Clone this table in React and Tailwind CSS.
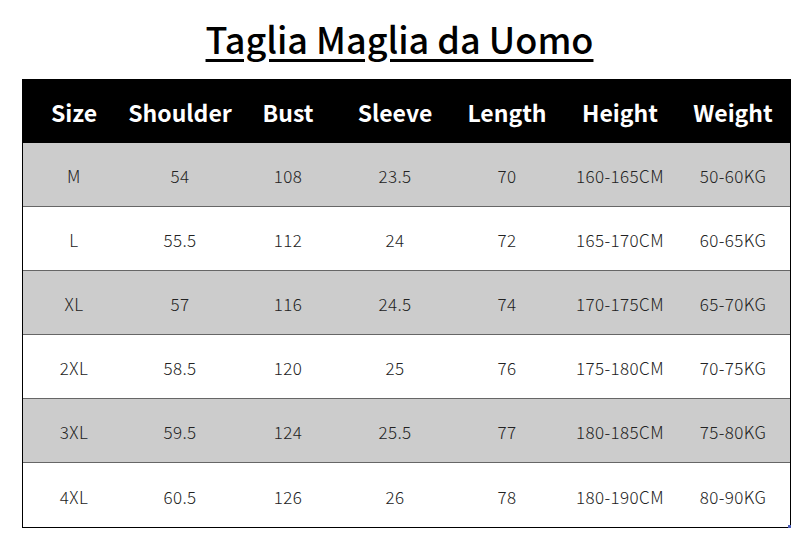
const headers = ['Size', 'Shoulder', 'Bust', 'Sleeve', 'Length', 'Height', 'Weight']

const rows = [
  ['M', '54', '108', '23.5', '70', '160-165CM', '50-60KG'],
  ['L', '55.5', '112', '24', '72', '165-170CM', '60-65KG'],
  ['XL', '57', '116', '24.5', '74', '170-175CM', '65-70KG'],
  ['2XL', '58.5', '120', '25', '76', '175-180CM', '70-75KG'],
  ['3XL', '59.5', '124', '25.5', '77', '180-185CM', '75-80KG'],
  ['4XL', '60.5', '126', '26', '78', '180-190CM', '80-90KG'],
]

const cols = 'grid grid-cols-[102px_110px_106px_108px_116px_110px_116px]'

export default function App() {
  return (
    <div className="w-[811px] h-[549px] bg-white font-['Noto_Sans_CJK_SC',sans-serif]">
      <div className="pt-[13px] pr-[12px] flex justify-center">
        <h1 className="text-[36px] leading-[50px] font-medium text-black underline decoration-[3px] underline-offset-[5px]">
          Taglia Maglia da Uomo
        </h1>
      </div>

      <div className="relative ml-[22px] mt-[16px] w-[769px] border-x border-b border-black">
        <div className={`${cols} h-[64px] bg-black text-white text-[23px] font-bold`}>
          {headers.map((h) => (
            <div key={h} className="flex items-center justify-center pt-[2px]">
              {h}
            </div>
          ))}
        </div>

        {rows.map((r, i) => (
          <div
            key={r[0]}
            className={`${cols} h-[64px] text-[17px] font-light tracking-[0.4px] text-[#222] ${
              i % 2 === 0 ? 'bg-[#cccccc]' : 'bg-white'
            } ${i < rows.length - 1 ? 'border-b border-[#666]' : ''}`}
          >
            {r.map((c, j) => (
              <div key={j} className="flex items-center justify-center pt-[3px]">
                {c}
              </div>
            ))}
          </div>
        ))}

        <div className="absolute -right-px -bottom-px w-[3px] h-[3px] bg-[#4a5cb8]" />
      </div>
    </div>
  )
}
